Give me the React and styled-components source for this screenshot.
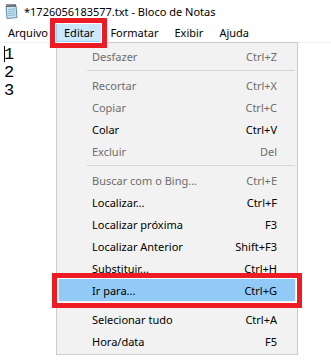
import React from "react";
import styled, { createGlobalStyle } from "styled-components";

const GlobalStyle = createGlobalStyle`
  body {
    margin: 0;
    background: #fff;
    font-family: "Noto Sans", "Open Sans", sans-serif;
    font-size: 11px;
    color: #000;
  }
`;

const Window = styled.div`
  position: relative;
  width: 331px;
  height: 364px;
  overflow: hidden;
  display: flex;
  flex-direction: column;
  background: #fff;
`;

const TitleBar = styled.div`
  height: 22px;
  display: flex;
  align-items: center;
  gap: 5px;
  padding-left: 3px;
  font-size: 11px;
  white-space: nowrap;
`;

const MenuBar = styled.div`
  height: 19px;
  padding-top: 1px;
  display: flex;
  border-bottom: 1px solid #f0f0f0;
`;

const MenuTitle = styled.div`
  position: relative;
  height: 17px;
  display: flex;
  align-items: center;
  padding: 0 7px;
  font-size: 11px;
  border: 1px solid ${(p) => (p.$open ? "#99d1ff" : "transparent")};
  background: ${(p) => (p.$open ? "#cce8ff" : "transparent")};
`;

const Editor = styled.div`
  flex: 1;
  padding: 3px 0 0 4px;
  font-family: "Liberation Mono", "DejaVu Sans Mono", monospace;
  font-size: 17px;
  line-height: 18px;
`;

const Caret = styled.span`
  display: inline-block;
  width: 0;
  height: 16px;
  border-left: 1px solid #000;
  margin-right: -1px;
  vertical-align: -3px;
`;

const Dropdown = styled.div`
  position: absolute;
  left: 56px;
  top: 42px;
  width: 242px;
  box-sizing: border-box;
  background: #f2f2f2;
  border: 1px solid #cccccc;
  padding: 2px;
`;

const Row = styled.div`
  position: relative;
  height: 22px;
  display: flex;
  align-items: center;
  justify-content: space-between;
  padding: 0 18px 0 33px;
  color: ${(p) => (p.$disabled ? "#6d6d6d" : "#000")};
  background: ${(p) => (p.$hot ? "#91c9f7" : "transparent")};
  white-space: nowrap;
`;

const Separator = styled.div`
  height: 7px;
  display: flex;
  align-items: center;
  padding-left: 28px;

  &::after {
    content: "";
    flex: 1;
    height: 1px;
    background: #d7d7d7;
  }
`;

const Mark = styled.div`
  position: absolute;
  top: -6px;
  bottom: -7px;
  left: ${(p) => p.$l}px;
  right: ${(p) => p.$r}px;
  border: 5px solid #ed1c24;
  box-shadow: inset 0 0 0 1px #fff;
  pointer-events: none;
  z-index: 2;
`;

const NotepadIcon = () => (
  <svg width="16" height="16" viewBox="0 0 16 16">
    <path d="M3 3.5 L13 2.5 L14 14.5 L4 15.5 Z" fill="#c7e6f2" stroke="#5d8aa6" strokeWidth="1" />
    <path d="M5 6.5 L12 6 M5 8.5 L12 8 M5 10.5 L12.3 10 M5 12.5 L12.4 12" stroke="#86b3cc" strokeWidth="0.9" />
    {[4, 6, 8, 10, 12].map((x) => (
      <rect key={x} x={x - 0.6} y="1" width="1.2" height="3" fill="#4a4a4a" />
    ))}
  </svg>
);

const menus = ["Arquivo", "Editar", "Formatar", "Exibir", "Ajuda"];

const items = [
  { label: "Desfazer", key: "Ctrl+Z", disabled: true },
  "sep",
  { label: "Recortar", key: "Ctrl+X", disabled: true },
  { label: "Copiar", key: "Ctrl+C", disabled: true },
  { label: "Colar", key: "Ctrl+V" },
  { label: "Excluir", key: "Del", disabled: true },
  "sep",
  { label: "Buscar com o Bing...", key: "Ctrl+E", disabled: true },
  { label: "Localizar...", key: "Ctrl+F" },
  { label: "Localizar próxima", key: "F3" },
  { label: "Localizar Anterior", key: "Shift+F3" },
  { label: "Substituir...", key: "Ctrl+H" },
  { label: "Ir para...", key: "Ctrl+G", hot: true },
  "sep",
  { label: "Selecionar tudo", key: "Ctrl+A" },
  { label: "Hora/data", key: "F5" },
];

export default function App() {
  return (
    <Window>
      <GlobalStyle />
      <TitleBar>
        <NotepadIcon />
        <span>*1726056183577.txt - Bloco de Notas</span>
      </TitleBar>
      <MenuBar>
        {menus.map((m) => (
          <MenuTitle key={m} $open={m === "Editar"}>
            {m}
            {m === "Editar" && <Mark $l={-7} $r={-6} />}
          </MenuTitle>
        ))}
      </MenuBar>
      <Editor>
        <div>
          <Caret />1
        </div>
        <div>2</div>
        <div>3</div>
      </Editor>
      <Dropdown>
        {items.map((it, i) =>
          it === "sep" ? (
            <Separator key={i} />
          ) : (
            <Row key={i} $disabled={it.disabled} $hot={it.hot}>
              <span>{it.label}</span>
              <span>{it.key}</span>
              {it.hot && <Mark $l={-7} $r={-7} />}
            </Row>
          )
        )}
      </Dropdown>
    </Window>
  );
}
